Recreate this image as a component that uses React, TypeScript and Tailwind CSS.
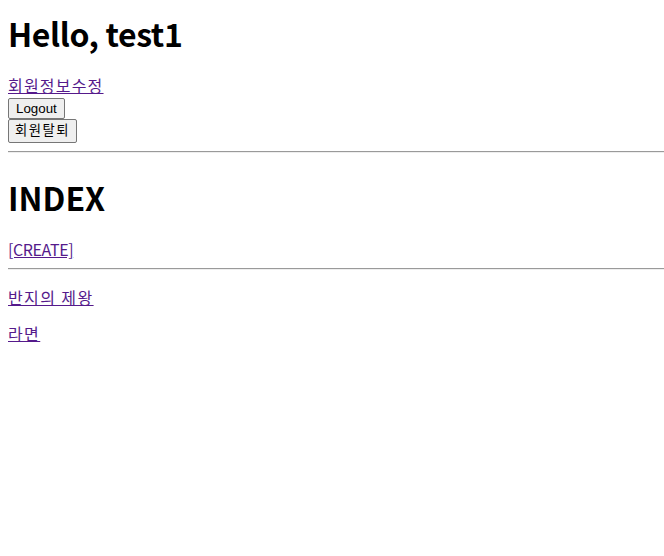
export default function App() {
  return (
    <div className="min-h-[556px] bg-white px-[8px] pt-[12px] text-black font-['Noto_Sans_CJK_KR','Noto_Sans',sans-serif]">
      <h1 className="text-[32px] font-bold leading-[42px] tracking-[-0.4px]">Hello, test1</h1>
      <div className="mt-[20px] text-[16px] leading-[22px]">
        <a href="#" className="tracking-[1.2px] text-[#551a8b] underline">
          회원정보수정
        </a>
      </div>
      <button className="mt-[2px] block h-[21px] rounded-[2px] border border-[#767676] bg-[#efefef] px-[7px] text-[13.33px] leading-[15px] font-['Liberation_Sans','Noto_Sans_CJK_KR',sans-serif]">
        Logout
      </button>
      <button className="block h-[24px] rounded-[2px] border border-[#767676] bg-[#efefef] px-[6px] text-[13.33px] leading-[18px] tracking-[1.5px] font-['Liberation_Sans','Noto_Sans_CJK_KR',sans-serif]">
        회원탈퇴
      </button>
      <hr className="-mr-[8px] mt-[8px] border-t border-b border-t-[#9a9a9a] border-b-[#eeeeee]" />
      <h1 className="mt-[23px] text-[32px] font-bold leading-[42px]">INDEX</h1>
      <div className="mt-[20px] text-[16px] leading-[22px]">
        <a href="#" className="tracking-[-0.4px] text-[#551a8b] underline">
          [CREATE]
        </a>
      </div>
      <hr className="-mr-[8px] mt-[8px] border-t border-b border-t-[#9a9a9a] border-b-[#eeeeee]" />
      <ul>
        <li className="mt-[16px] text-[16px] leading-[22px]">
          <a href="#" className="tracking-[1.4px] text-[#551a8b] underline">
            반지의 제왕
          </a>
        </li>
        <li className="mt-[14px] text-[16px] leading-[22px]">
          <a href="#" className="tracking-[1.4px] text-[#551a8b] underline">
            라면
          </a>
        </li>
      </ul>
    </div>
  );
}
